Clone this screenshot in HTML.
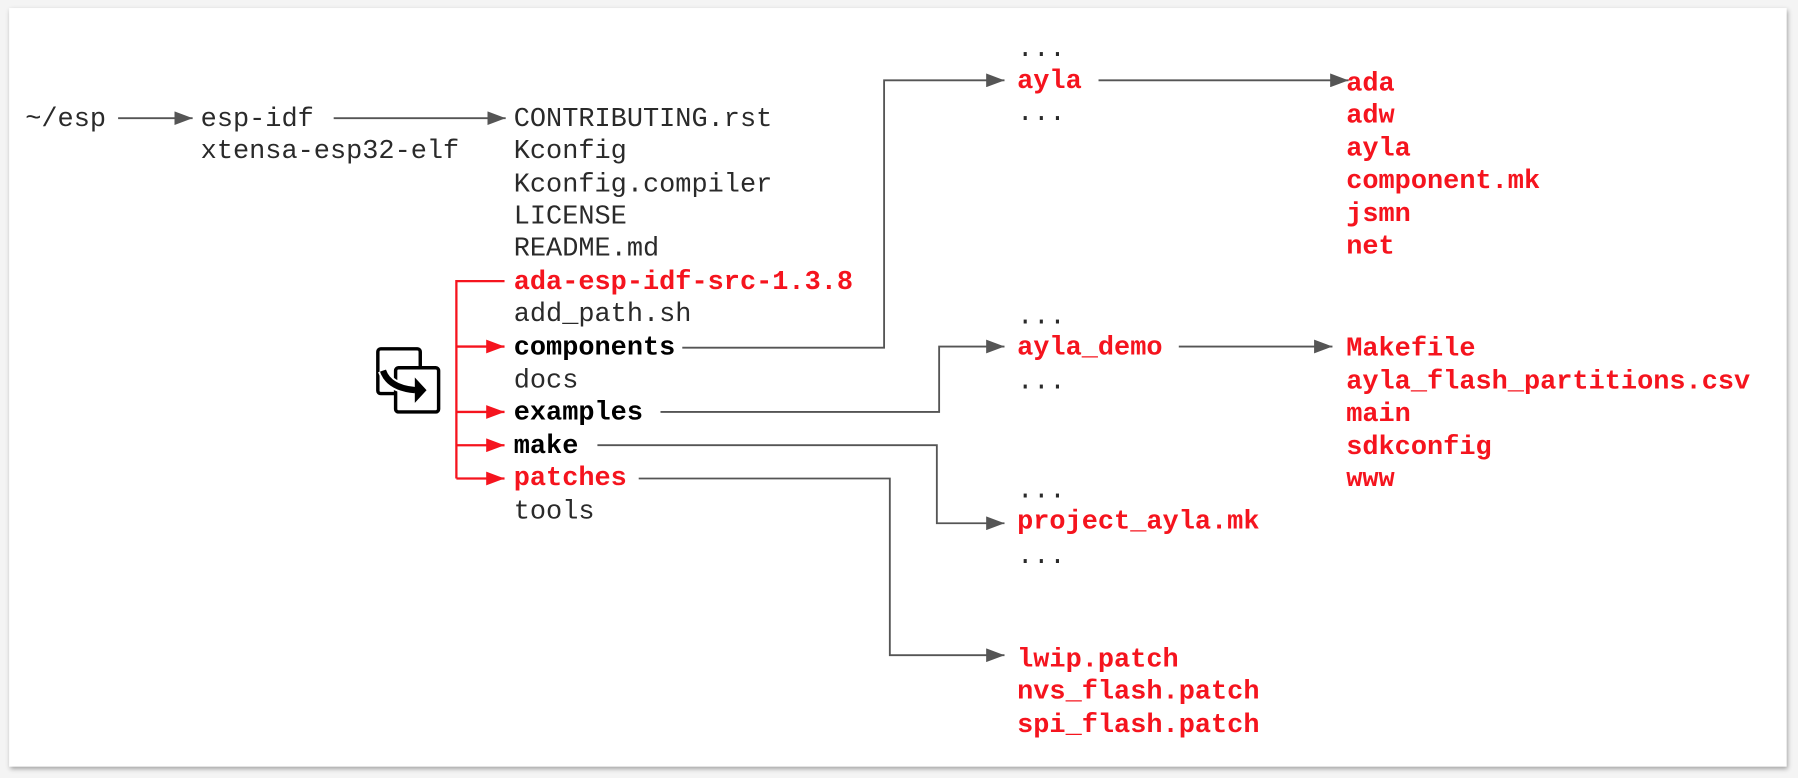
<!DOCTYPE html>
<html><head><meta charset="utf-8"><style>
html,body{margin:0;padding:0;background:#fff;width:1798px;height:778px;overflow:hidden}
svg{display:block}
text{font-family:"Liberation Mono",monospace;font-size:23.5px;dominant-baseline:central}
.g{fill:#2a2a2a}
.b{fill:#000;font-weight:bold}
.r{fill:#f5141e;font-weight:bold}
</style></head><body>
<svg width="1798" height="778" viewBox="0 0 1568 678" preserveAspectRatio="none">
<defs>
<marker id="ag" markerWidth="16" markerHeight="12" refX="16" refY="6" orient="auto" markerUnits="userSpaceOnUse"><path d="M0,0L16,6L0,12z" fill="#555"/></marker>
<marker id="ar" markerWidth="16" markerHeight="12" refX="16" refY="6" orient="auto" markerUnits="userSpaceOnUse"><path d="M0,0L16,6L0,12z" fill="#f5141e"/></marker>
<filter id="sh" x="-2%" y="-2%" width="104%" height="106%"><feDropShadow dx="1" dy="2" stdDeviation="2" flood-color="#000" flood-opacity="0.35"/></filter>
</defs>
<rect x="0" y="0" width="1568" height="678" fill="#f4f4f4"/>
<rect x="8" y="7" width="1550" height="661" fill="#fff" filter="url(#sh)"/>
<g fill="none" stroke="#555" stroke-width="1.6">
<path d="M103,103H168" marker-end="url(#ag)"/>
<path d="M291,103H441" marker-end="url(#ag)"/>
<path d="M595,303H771V70H876" marker-end="url(#ag)"/>
<path d="M576,359H819V302H876" marker-end="url(#ag)"/>
<path d="M521,388H817V456H876" marker-end="url(#ag)"/>
<path d="M557,417H776V571H876" marker-end="url(#ag)"/>
<path d="M958,70H1176" marker-end="url(#ag)"/>
<path d="M1028,302H1162" marker-end="url(#ag)"/>
</g>
<g fill="none" stroke="#f5141e" stroke-width="2">
<path d="M440,245H398V417"/>
<path d="M398,302H440" marker-end="url(#ar)"/>
<path d="M398,359H440" marker-end="url(#ar)"/>
<path d="M398,388H440" marker-end="url(#ar)"/>
<path d="M398,417H440" marker-end="url(#ar)"/>
</g>
<g stroke="#000" stroke-width="3" fill="none" stroke-linejoin="round">
<path d="M344,343H332a2.5,2.5 0 0 1-2.5-2.5V306.5a2.5,2.5 0 0 1 2.5-2.5h32a2.5,2.5 0 0 1 2.5,2.5v13"/>
<rect x="345" y="320.5" width="37.5" height="38.5" rx="2.5"/>
</g>
<path d="M334,323Q339,338 362,340" fill="none" stroke="#fff" stroke-width="9"/>
<path d="M361,327L373,340L361,353z" fill="#000" stroke="#fff" stroke-width="1.5"/>
<path d="M334,323Q339,338 362,340" fill="none" stroke="#000" stroke-width="5.5"/>
<g transform="translate(0,1.5)">
<text x="22" y="103" class="g">~/esp</text>
<text x="175" y="103" class="g">esp-idf</text>
<text x="175" y="131" class="g">xtensa-esp32-elf</text>
<text x="448" y="103" class="g">CONTRIBUTING.rst</text>
<text x="448" y="131" class="g">Kconfig</text>
<text x="448" y="160" class="g">Kconfig.compiler</text>
<text x="448" y="188" class="g">LICENSE</text>
<text x="448" y="216" class="g">README.md</text>
<text x="448" y="245" class="r">ada-esp-idf-src-1.3.8</text>
<text x="448" y="273" class="g">add_path.sh</text>
<text x="448" y="302" class="b">components</text>
<text x="448" y="331" class="g">docs</text>
<text x="448" y="359" class="b">examples</text>
<text x="448" y="388" class="b">make</text>
<text x="448" y="416" class="r">patches</text>
<text x="448" y="445" class="g">tools</text>
<text x="887" y="42" class="g">...</text>
<text x="887" y="70" class="r">ayla</text>
<text x="887" y="98" class="g">...</text>
<text x="887" y="275" class="g">...</text>
<text x="887" y="302" class="r">ayla_demo</text>
<text x="887" y="332" class="g">...</text>
<text x="887" y="427" class="g">...</text>
<text x="887" y="454" class="r">project_ayla.mk</text>
<text x="887" y="484" class="g">...</text>
<text x="887" y="574" class="r">lwip.patch</text>
<text x="887" y="602" class="r">nvs_flash.patch</text>
<text x="887" y="631" class="r">spi_flash.patch</text>
<text x="1174" y="72" class="r">ada</text>
<text x="1174" y="100" class="r">adw</text>
<text x="1174" y="129" class="r">ayla</text>
<text x="1174" y="157" class="r">component.mk</text>
<text x="1174" y="186" class="r">jsmn</text>
<text x="1174" y="214" class="r">net</text>
<text x="1174" y="303" class="r">Makefile</text>
<text x="1174" y="332" class="r">ayla_flash_partitions.csv</text>
<text x="1174" y="360" class="r">main</text>
<text x="1174" y="389" class="r">sdkconfig</text>
<text x="1174" y="417" class="r">www</text>
</g>
</svg>
</body></html>
